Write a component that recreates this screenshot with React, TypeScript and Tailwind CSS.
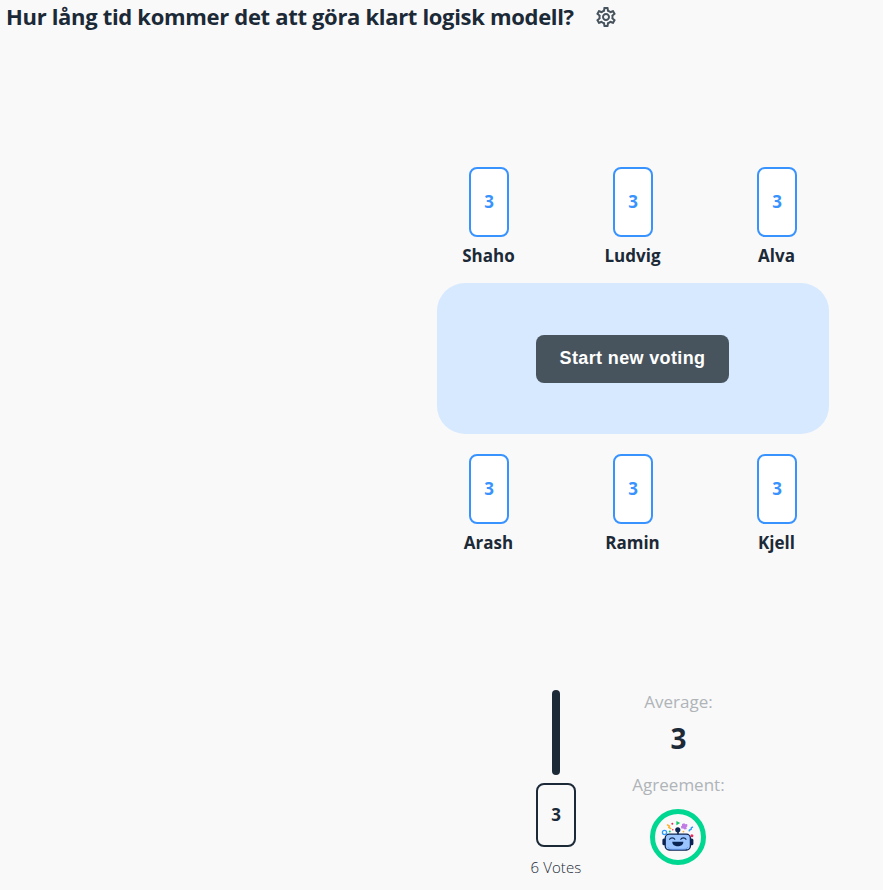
import { MdOutlineSettings } from "react-icons/md";

const top = ["Shaho", "Ludvig", "Alva"];
const bottom = ["Arash", "Ramin", "Kjell"];

function Player({ name }: { name: string }) {
  return (
    <div className="flex w-36 flex-col items-center">
      <div className="flex h-[70px] w-10 items-center justify-center rounded-lg border-2 border-[#3993ff] bg-white text-[17px] font-bold text-[#3993ff]">
        3
      </div>
      <div className="mt-[7px] mr-px h-6 text-[17px] leading-6 font-bold">{name}</div>
    </div>
  );
}

function Robot() {
  return (
    <svg viewBox="0 0 46 46" className="h-[46px] w-[46px] shrink-0" fill="none">
      <circle cx="9.5" cy="18.5" r="2.1" stroke="#2d9cff" strokeWidth="1.3" />
      <path d="M12 10.6l2.4 1.4-.6 1.4 2.4 1.5" stroke="#ffb02e" strokeWidth="1.5" />
      <path d="M21.4 6.9l3.8 2-3.8 2.4z" fill="#12c766" />
      <path d="M27 10l2.2-.8 1.2 1 1.8-.3.2 2.3-1.1 1.1.5 1.8-2.3.5-1.2-1.1-2 .1-.3-2.1 1-1z" fill="#c17be5" />
      <path d="M38 13l-1.6.7-.2 1.5-1.7.8-.4 1.4" stroke="#2d9cff" strokeWidth="1.4" />
      <circle cx="17.3" cy="9.8" r="1" fill="#f3265b" />
      <circle cx="14.8" cy="17.5" r="1" fill="#12c766" />
      <circle cx="17.8" cy="15.8" r=".8" fill="#f3265b" />
      <circle cx="28.5" cy="17.6" r=".9" fill="#ffb02e" />
      <circle cx="36.9" cy="21.7" r="1.5" fill="#f3265b" />
      <path d="M23 21v-5" stroke="#0b2553" strokeWidth="1.6" />
      <circle cx="22.8" cy="15.8" r="2.6" fill="#0b2553" />
      <rect x="7.4" y="24.5" width="4" height="6.8" rx="1.5" fill="#0b2553" />
      <rect x="34.4" y="24.5" width="4" height="6.8" rx="1.5" fill="#0b2553" />
      <rect x="10.2" y="20.2" width="25.2" height="15.8" rx="4" fill="#9bc5ff" stroke="#0b2553" strokeWidth="1.3" />
      <path d="M12.8 32.9c1 2 2 2.3 4 2.3h12c2 0 3-.5 4-2.3" stroke="#6ea4f5" strokeWidth="1" />
      <path d="M14.6 25.3c1-1.9 4.2-1.9 5.2 0M25.8 25.3c1-1.9 4.2-1.9 5.2 0" stroke="#0b2553" strokeWidth="1.1" strokeLinecap="round" />
      <path d="M17.3 27.7h11c.4 6-11.4 6-11 0z" fill="#0b2553" />
    </svg>
  );
}

export default function App() {
  return (
    <div className="h-[890px] w-[883px] overflow-hidden bg-[#f9f9f9] font-['Open_Sans','Noto_Sans',sans-serif] text-[#1c2937]">
      <header className="flex h-[34px] items-center pl-[6px]">
        <h1 className="w-[588px] pb-0.5 text-[22px] leading-[30px] font-bold tracking-[-0.32px] whitespace-nowrap">
          Hur lång tid kommer det att göra klart logisk modell?
        </h1>
        <MdOutlineSettings className="size-6 shrink-0 text-[#48545d]" />
      </header>
      <main className="ml-[417px] w-[432px] pt-[133px]">
        <div className="flex">
          {top.map((n) => (
            <Player key={n} name={n} />
          ))}
        </div>
        <div className="mx-5 mt-[15px] mb-5 flex h-[151px] items-center justify-center rounded-[28px] bg-[#d7e9ff]">
          <button className="mr-px h-12 w-[193px] rounded-lg bg-[#48545d] pb-px font-['Liberation_Sans',sans-serif] text-[18px] font-bold tracking-[0.36px] text-white">
            Start new voting
          </button>
        </div>
        <div className="flex">
          {bottom.map((n) => (
            <Player key={n} name={n} />
          ))}
        </div>
      </main>
      <section className="mt-[135px] ml-[516px] flex">
        <div className="flex w-20 flex-col items-center">
          <div className="h-[85px] w-2 rounded-full bg-[#1c2937]" />
          <div className="mt-2 flex h-16 w-10 items-center justify-center rounded-lg border-2 border-[#1c2937] text-[17px] font-bold">
            3
          </div>
          <div className="mt-2 text-[15px] leading-6 font-[350] tracking-[0.1px] whitespace-nowrap">6 Votes</div>
        </div>
        <div className="ml-[22px] flex w-[121px] flex-col items-center">
          <div className="text-[17px] leading-6 text-[#afb4b8]">Average:</div>
          <div className="mt-1.5 text-[28px] leading-9 font-bold">3</div>
          <div className="mt-[17px] text-[17px] leading-6 text-[#afb4b8]">Agreement:</div>
          <div className="mt-3 mr-px flex size-14 items-center justify-center rounded-full border-5 border-[#00d790]">
            <Robot />
          </div>
        </div>
      </section>
    </div>
  );
}
